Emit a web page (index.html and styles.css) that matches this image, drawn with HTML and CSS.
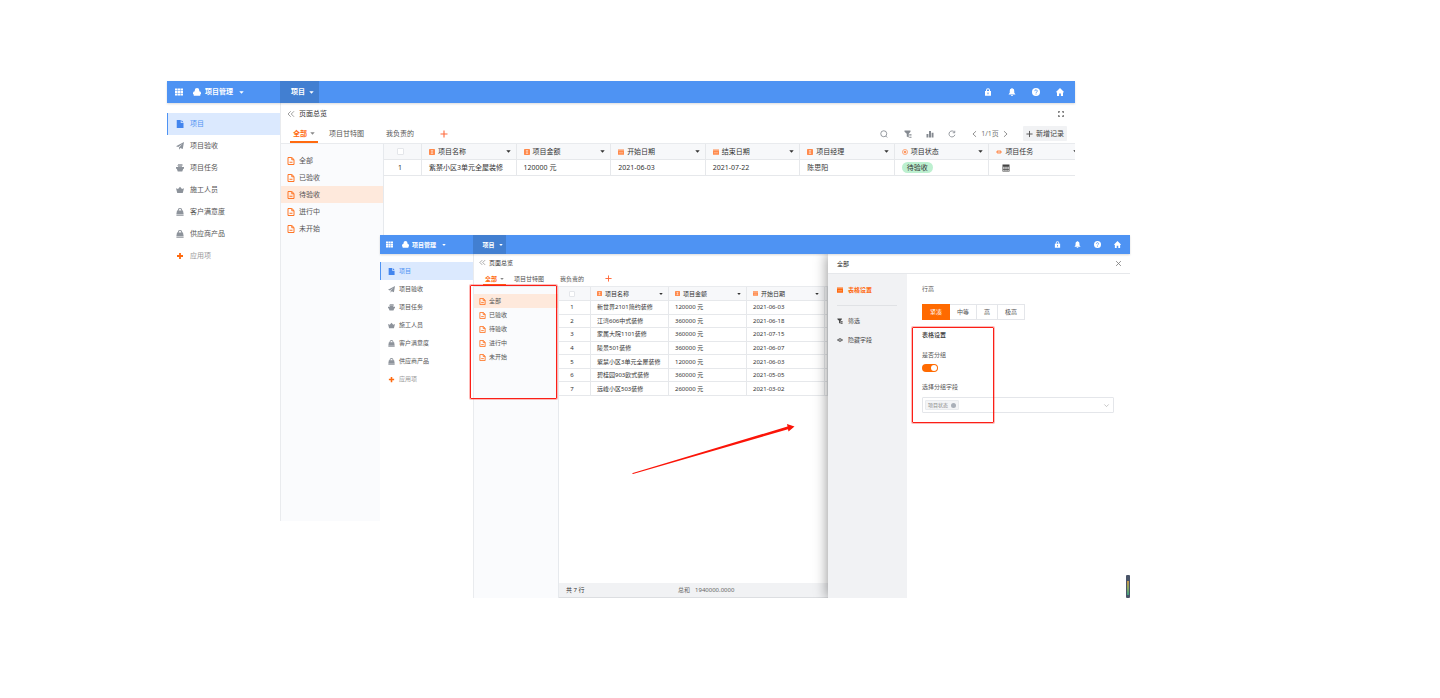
FILE: index.html
```html
<!DOCTYPE html>
<html lang="zh-CN">
<head>
<meta charset="utf-8">
<title>项目管理</title>
<link rel="stylesheet" href="styles.css">
</head>
<body>
<svg class="sprite" aria-hidden="true">
  <symbol id="grid" viewBox="0 0 16 16"><path fill="currentColor" d="M0 1h4.800v4H0zM5.600 1h4.800v4H5.600zM11.200 1H16v4h-4.800zM0 6h4.800v4H0zM5.600 6h4.800v4H5.600zM11.200 6H16v4h-4.800zM0 11h4.800v4H0zM5.600 11h4.800v4H5.600zM11.200 11H16v4h-4.800z"/></symbol>
  <symbol id="logo" viewBox="0 0 16 16"><path fill="currentColor" d="M8 0a4.500 4.500 0 0 1 4.500 4.500V6.500A3.500 3.500 0 0 1 16 10v2.500h-1.500V15.500h-13V12.500H0V10a3.500 3.500 0 0 1 3.500-3.500V4.500A4.500 4.500 0 0 1 8 0z"/></symbol>
  <symbol id="caret" viewBox="0 0 16 16"><path fill="currentColor" d="M1 4h14l-7 8z"/></symbol>
  <symbol id="lock" viewBox="0 0 16 16"><path fill="currentColor" fill-rule="evenodd" d="M4 6V4.500a4 4 0 0 1 8 0V6h2v9.500H2V6zM6 6h4V4.500a2 2 0 0 0-4 0zM7 9v3.500h2V9z"/></symbol>
  <symbol id="bell" viewBox="0 0 16 16"><path fill="currentColor" d="M8 0l1.200 1.200A4.500 4.500 0 0 1 12.500 6v3.500L15 13H1l2.500-3.500V6a4.500 4.500 0 0 1 3.300-4.800zM6 14h4a2 2 0 0 1-4 0z"/></symbol>
  <symbol id="help" viewBox="0 0 16 16"><circle cx="8" cy="8" r="8" fill="currentColor"/><path d="M5.500 6.300a2.500 2.500 0 1 1 3.500 2.200c-.8.400-1 .7-1 1.500M8 11.200v1.700" fill="none" stroke="#4e93f3" stroke-width="1.700"/></symbol>
  <symbol id="home" viewBox="0 0 16 16"><path fill="currentColor" d="M8 0l8 8-1.200 1.200L14 8.500V16H9.800v-5H6.200v5H2V8.500l-.8.700L0 8z"/></symbol>
  <symbol id="doc" viewBox="0 0 16 16"><path fill="currentColor" d="M1.500 0h8v6h5.500v10H1.500zM11 0l4 4.500h-4z"/></symbol>
  <symbol id="plane" viewBox="0 0 16 16"><path fill="currentColor" d="M16 0l-2.500 14-5-2L6 15.500V11l7-7.500-8.500 6.500L0 8.500z"/></symbol>
  <symbol id="printer" viewBox="0 0 16 16"><path fill="currentColor" d="M4 0h9v1.500H4zM3 2.500h10V4H3zM0 6h16v3.500H0zM1.500 9.500h13l-2 5.500h-9zM4 4.500h8V6H4z"/></symbol>
  <symbol id="crown" viewBox="0 0 16 16"><path fill="currentColor" d="M0 4.500l4 1.500 4-4.500L12 6l4-1.500L13.500 14h-11z"/></symbol>
  <symbol id="bag" viewBox="0 0 16 16"><path fill="currentColor" fill-rule="evenodd" d="M3.500 5V4.500a4.500 4.500 0 0 1 9 0V5H14l1.200 7H.8L2 5zM5.500 5h5v-.5a2.500 2.500 0 0 0-5 0zM.8 12.800h14.400v2.700H.8z"/></symbol>
  <symbol id="cross" viewBox="0 0 16 16"><path d="M8 2v12M2 8h12" stroke="currentColor" stroke-width="3.600"/></symbol>
  <symbol id="plus" viewBox="0 0 16 16"><path d="M8 1v14M1 8h14" stroke="currentColor" stroke-width="2.200"/></symbol>
  <symbol id="back" viewBox="0 0 16 16"><path d="M7.500 2.500L2 8l5.500 5.500M14 2.500L8.500 8l5.500 5.500" fill="none" stroke="currentColor" stroke-width="1.600"/></symbol>
  <symbol id="expand" viewBox="0 0 16 16"><path fill="currentColor" d="M2 2h4v2L4 6H2zM14 2h-4v2l2 2h2zM2 14h4v-2l-2-2H2zM14 14h-4v-2l2-2h2z"/></symbol>
  <symbol id="search" viewBox="0 0 16 16"><circle cx="7.500" cy="7.500" r="6" fill="none" stroke="currentColor" stroke-width="1.700"/><path d="M11.500 12l3 3" stroke="currentColor" stroke-width="1.700"/></symbol>
  <symbol id="filter" viewBox="0 0 16 16"><path fill="currentColor" d="M1 1h12v2.500L9.500 7.500V15l-4-2V7.500L1 3.500zM10.500 8H15v1.700h-4.500zM10.500 11H15v1.700h-4.500zM10.500 14H15v1.700h-4.500z"/></symbol>
  <symbol id="chart" viewBox="0 0 16 16"><path fill="currentColor" d="M1 8h3.800v7H1zM6 2h4v13H6zM11.200 5.500H15V15h-3.800z"/></symbol>
  <symbol id="refresh" viewBox="0 0 16 16"><path d="M13 4.500A6 6 0 1 0 13.800 9.500M13.500 1.500v4H9.500" fill="none" stroke="currentColor" stroke-width="1.700"/></symbol>
  <symbol id="prev" viewBox="0 0 16 16"><path d="M11.500 1.500L4.500 8l7 6.500" fill="none" stroke="currentColor" stroke-width="1.800"/></symbol>
  <symbol id="next" viewBox="0 0 16 16"><path d="M4.500 1.500l7 6.500-7 6.500" fill="none" stroke="currentColor" stroke-width="1.800"/></symbol>
  <symbol id="down" viewBox="0 0 16 16"><path d="M3 5.500l5 5 5-5" fill="none" stroke="currentColor" stroke-width="1.500"/></symbol>
  <symbol id="close" viewBox="0 0 16 16"><path d="M2.500 2.500l11 11M13.500 2.500l-11 11" stroke="currentColor" stroke-width="1.800"/></symbol>
  <symbol id="note" viewBox="0 0 16 16"><path d="M2 1h7.500L14 5v10H2zM9.500 1v4.500H14" fill="none" stroke="currentColor" stroke-width="2"/><path d="M5 10.500h6" stroke="currentColor" stroke-width="2"/></symbol>
  <symbol id="text" viewBox="0 0 16 16"><rect width="16" height="16" rx="2" fill="currentColor"/><path d="M5 4.500h6M8 4.500v7M5 11.500h6" stroke="#fff" stroke-width="1.500"/></symbol>
  <symbol id="date" viewBox="0 0 16 16"><path fill="currentColor" d="M0 1h16v3.500H0zM0 5.500h16V15H0z"/><path d="M2.500 10h11" stroke="#fff" stroke-width="1"/></symbol>
  <symbol id="radio" viewBox="0 0 16 16"><circle cx="8" cy="8" r="6.800" fill="none" stroke="currentColor" stroke-width="1.800"/><path fill="currentColor" d="M8 4L12 8 8 12 4 8z"/></symbol>
  <symbol id="link" viewBox="0 0 16 16"><path d="M6.500 3.500L2 8l4.500 4.500M9.500 3.500L14 8l-4.500 4.500M5 8h6" fill="none" stroke="currentColor" stroke-width="2.800"/></symbol>
  <symbol id="sheet" viewBox="0 0 16 16"><path fill="currentColor" fill-rule="evenodd" d="M1 1h14v14H1zM2.300 5.500v2h3v-2zM6.500 5.500v2h3v-2zM10.700 5.500v2h3v-2zM2.300 8.700v2h3v-2zM6.500 8.700v2h3v-2zM10.700 8.700v2h3v-2zM2.300 12v1.700h3V12zM6.500 12v1.700h3V12zM10.700 12v1.700h3V12z"/></symbol>
  <symbol id="eye" viewBox="0 0 16 16"><path d="M1 8q7-8 14 0-7 8-14 0z" fill="none" stroke="currentColor" stroke-width="2.200"/><circle cx="8" cy="8" r="2" fill="currentColor"/></symbol>
</svg>

<main class="desktop">
  <section class="win win-back">
    <header class="topbar">
      <div class="brand"><svg class="ic"><use href="#grid"/></svg><svg class="ic logo"><use href="#logo"/></svg><strong>项目管理</strong><svg class="ic-s"><use href="#caret"/></svg></div>
      <button class="app-tab">项目<svg class="ic-s"><use href="#caret"/></svg></button>
      <nav class="top-actions">
        <button aria-label="锁定"><svg class="ic"><use href="#lock"/></svg></button>
        <button aria-label="通知"><svg class="ic"><use href="#bell"/></svg></button>
        <button aria-label="帮助"><svg class="ic"><use href="#help"/></svg></button>
        <button aria-label="首页"><svg class="ic"><use href="#home"/></svg></button>
      </nav>
    </header>
    <div class="body">
      <nav class="side">
        <a href="#" class="active"><svg class="ic"><use href="#doc"/></svg>项目</a>
        <a href="#"><svg class="ic"><use href="#plane"/></svg>项目验收</a>
        <a href="#"><svg class="ic"><use href="#printer"/></svg>项目任务</a>
        <a href="#"><svg class="ic"><use href="#crown"/></svg>施工人员</a>
        <a href="#"><svg class="ic"><use href="#bag"/></svg>客户满意度</a>
        <a href="#"><svg class="ic"><use href="#bag"/></svg>供应商产品</a>
        <a href="#" class="add"><svg class="ic"><use href="#cross"/></svg>应用项</a>
      </nav>
      <div class="content">
        <div class="title-row"><svg class="ic"><use href="#back"/></svg><span>页面总览</span><svg class="ic end"><use href="#expand"/></svg></div>
        <div class="tab-row">
          <button class="tab current">全部<svg class="ic-s"><use href="#caret"/></svg></button>
          <button class="tab">项目甘特图</button>
          <button class="tab">我负责的</button>
          <button class="tab-add" aria-label="添加"><svg class="ic"><use href="#plus"/></svg></button>
          <div class="tools">
            <button aria-label="搜索"><svg class="ic"><use href="#search"/></svg></button>
            <span class="gap"></span>
            <button aria-label="筛选"><svg class="ic"><use href="#filter"/></svg></button>
            <button aria-label="图表"><svg class="ic"><use href="#chart"/></svg></button>
            <button aria-label="刷新"><svg class="ic"><use href="#refresh"/></svg></button>
            <div class="pager"><svg class="ic"><use href="#prev"/></svg><span>1/1页</span><svg class="ic"><use href="#next"/></svg></div>
            <button class="new"><svg class="ic"><use href="#plus"/></svg>新增记录</button>
          </div>
        </div>
        <div class="split">
          <nav class="groups">
            <a href="#"><svg class="ic"><use href="#note"/></svg>全部</a>
            <a href="#"><svg class="ic"><use href="#note"/></svg>已验收</a>
            <a href="#" class="picked"><svg class="ic"><use href="#note"/></svg>待验收</a>
            <a href="#"><svg class="ic"><use href="#note"/></svg>进行中</a>
            <a href="#"><svg class="ic"><use href="#note"/></svg>未开始</a>
          </nav>
          <div class="table-area">
            <table>
              <thead><tr>
                <th class="num"><input type="checkbox" aria-label="全选"></th>
                <th><div class="th"><svg><use href="#text"/></svg>项目名称<svg class="sort"><use href="#caret"/></svg></div></th>
                <th><div class="th"><svg><use href="#text"/></svg>项目金额<svg class="sort"><use href="#caret"/></svg></div></th>
                <th><div class="th"><svg><use href="#date"/></svg>开始日期<svg class="sort"><use href="#caret"/></svg></div></th>
                <th><div class="th"><svg><use href="#date"/></svg>结束日期<svg class="sort"><use href="#caret"/></svg></div></th>
                <th><div class="th"><svg><use href="#text"/></svg>项目经理<svg class="sort"><use href="#caret"/></svg></div></th>
                <th><div class="th"><svg><use href="#radio"/></svg>项目状态<svg class="sort"><use href="#caret"/></svg></div></th>
                <th><div class="th"><svg><use href="#link"/></svg>项目任务<svg class="sort"><use href="#caret"/></svg></div></th>
              </tr></thead>
              <tbody><tr><td class="num">1</td><td>紫禁小区3单元全屋装修</td><td>120000 元</td><td>2021-06-03</td><td>2021-07-22</td><td>陈思阳</td><td><span class="badge">待验收</span></td><td><svg class="ic sheet"><use href="#sheet"/></svg></td></tr></tbody>
            </table>
          </div>
        </div>
      </div>
    </div>
  </section>

  <section class="win win-front">
    <header class="topbar">
      <div class="brand"><svg class="ic"><use href="#grid"/></svg><svg class="ic logo"><use href="#logo"/></svg><strong>项目管理</strong><svg class="ic-s"><use href="#caret"/></svg></div>
      <button class="app-tab">项目<svg class="ic-s"><use href="#caret"/></svg></button>
      <nav class="top-actions">
        <button aria-label="锁定"><svg class="ic"><use href="#lock"/></svg></button>
        <button aria-label="通知"><svg class="ic"><use href="#bell"/></svg></button>
        <button aria-label="帮助"><svg class="ic"><use href="#help"/></svg></button>
        <button aria-label="首页"><svg class="ic"><use href="#home"/></svg></button>
      </nav>
    </header>
    <div class="body">
      <nav class="side">
        <a href="#" class="active"><svg class="ic"><use href="#doc"/></svg>项目</a>
        <a href="#"><svg class="ic"><use href="#plane"/></svg>项目验收</a>
        <a href="#"><svg class="ic"><use href="#printer"/></svg>项目任务</a>
        <a href="#"><svg class="ic"><use href="#crown"/></svg>施工人员</a>
        <a href="#"><svg class="ic"><use href="#bag"/></svg>客户满意度</a>
        <a href="#"><svg class="ic"><use href="#bag"/></svg>供应商产品</a>
        <a href="#" class="add"><svg class="ic"><use href="#cross"/></svg>应用项</a>
      </nav>
      <div class="content">
        <div class="title-row"><svg class="ic"><use href="#back"/></svg><span>页面总览</span></div>
        <div class="tab-row">
          <button class="tab current">全部<svg class="ic-s"><use href="#caret"/></svg></button>
          <button class="tab">项目甘特图</button>
          <button class="tab">我负责的</button>
          <button class="tab-add" aria-label="添加"><svg class="ic"><use href="#plus"/></svg></button>
        </div>
        <div class="split">
          <nav class="groups">
            <a href="#" class="picked"><svg class="ic"><use href="#note"/></svg>全部</a>
            <a href="#"><svg class="ic"><use href="#note"/></svg>已验收</a>
            <a href="#"><svg class="ic"><use href="#note"/></svg>待验收</a>
            <a href="#"><svg class="ic"><use href="#note"/></svg>进行中</a>
            <a href="#"><svg class="ic"><use href="#note"/></svg>未开始</a>
          </nav>
          <div class="table-area">
            <table>
              <thead><tr>
                <th class="num"><input type="checkbox" aria-label="全选"></th>
                <th><div class="th"><svg><use href="#text"/></svg>项目名称<svg class="sort"><use href="#caret"/></svg></div></th>
                <th><div class="th"><svg><use href="#text"/></svg>项目金额<svg class="sort"><use href="#caret"/></svg></div></th>
                <th><div class="th"><svg><use href="#date"/></svg>开始日期<svg class="sort"><use href="#caret"/></svg></div></th>
                <th class="rest"></th>
              </tr></thead>
              <tbody>
                <tr><td class="num">1</td><td>新世界2101简约装修</td><td>120000 元</td><td>2021-06-03</td><td></td></tr>
                <tr><td class="num">2</td><td>江湾606中式装修</td><td>360000 元</td><td>2021-06-18</td><td></td></tr>
                <tr><td class="num">3</td><td>家属大院1101装修</td><td>360000 元</td><td>2021-07-15</td><td></td></tr>
                <tr><td class="num">4</td><td>陵景501装修</td><td>360000 元</td><td>2021-06-07</td><td></td></tr>
                <tr><td class="num">5</td><td>紫禁小区3单元全屋装修</td><td>120000 元</td><td>2021-06-03</td><td></td></tr>
                <tr><td class="num">6</td><td>碧桂园903欧式装修</td><td>360000 元</td><td>2021-05-05</td><td></td></tr>
                <tr><td class="num">7</td><td>远峰小区503装修</td><td>260000 元</td><td>2021-03-02</td><td></td></tr>
              </tbody>
            </table>
            <footer class="summary"><span class="count">共 7 行</span><span>总和</span><span>1940000.0000</span></footer>
          </div>
        </div>
      </div>
      <aside class="drawer">
        <header class="drawer-head"><span>全部</span><button aria-label="关闭"><svg class="ic"><use href="#close"/></svg></button></header>
        <div class="drawer-body">
          <nav class="drawer-nav">
            <a href="#" class="on"><svg class="ic"><use href="#date"/></svg>表格设置</a>
            <hr>
            <a href="#"><svg class="ic"><use href="#filter"/></svg>筛选</a>
            <a href="#"><svg class="ic"><use href="#eye"/></svg>隐藏字段</a>
          </nav>
          <form class="settings">
            <p class="row-label">行高</p>
            <div class="segments"><button type="button" class="on">紧凑</button><button type="button">中等</button><button type="button">高</button><button type="button">极高</button></div>
            <h2>表格设置</h2>
            <label class="row-label" for="grouped">是否分组</label>
            <input class="switch" type="checkbox" role="switch" id="grouped" checked>
            <label class="row-label" for="field">选择分组字段</label>
            <div class="picker"><span class="tag">项目状态<button type="button" aria-label="移除"></button></span><select id="field"><option value=""></option></select><svg class="ic"><use href="#down"/></svg></div>
          </form>
        </div>
      </aside>
    </div>
    <i class="edge-widget"></i>
  </section>

  <div class="mark mark-groups"></div>
  <div class="mark mark-settings"></div>
  <svg class="arrow" viewBox="0 0 164 54" aria-hidden="true"><path fill="#fb1408" d="M0 51.200L155.500 4.500 155 2l7.500 2.500-6 5-.5-2.200L1 52z"/></svg>
</main>
</body>
</html>
```

FILE: styles.css
```css
* { box-sizing: border-box; }

body {
  margin: 0;
  background: #fff;
  color: #444;
  font-family: "Noto Sans", "Noto Sans CJK SC", sans-serif;
}

button, input, select {
  margin: 0;
  padding: 0;
  border: 0;
  background: none;
  color: inherit;
  font: inherit;
}

a { color: inherit; text-decoration: none; }
svg { display: block; flex: none; }
.sprite { position: absolute; width: 0; height: 0; }

.desktop {
  position: relative;
  min-height: 100vh;
  overflow: hidden;
}

.win {
  position: absolute;
  display: flex;
  flex-direction: column;
  background: #fff;
  font-size: var(--text);
  line-height: var(--line);
}

.win-back {
  --text: 7px; --line: 10px; --icon: 8px; --small: 5px;
  --bar: 22px; --brand-in: 8px; --side: 113px; --item: 22px; --side-top: 10px; --side-gap: 6px;
  --title: 21px; --tabs: 20px; --pad: 9px; --tab-in: 3px; --tab-pad: 11px; --caret-gap: 3px;
  --groups: 103px; --groups-top: 8px; --group: 17px; --group-in: 6px; --gap: 4px;
  --num: 38px; --cell: 7px; --head: 16px; --row: 16px; --action: 24px;
  --app: 39px; --plus-gap: 15px;
  top: 81px;
  left: 167px;
  right: 365px;
  min-height: 440px;
}

.win-front {
  --text: 6px; --line: 8px; --icon: 7px; --small: 4px;
  --bar: 19px; --brand-in: 6px; --side: 93px; --item: 18px; --side-top: 8px; --side-gap: 4px;
  --title: 17px; --tabs: 16px; --pad: 9px; --tab-in: 2px; --tab-pad: 8px; --caret-gap: 3px;
  --groups: 85px; --groups-top: 7px; --group: 14px; --group-in: 5px; --gap: 3px;
  --num: 32px; --cell: 6px; --head: 14px; --row: 13px; --action: 20px;
  --app: 33px; --plus-gap: 13px;
  top: 235px;
  left: 380px;
  right: 310px;
  min-height: 363px;
}

.ic { width: var(--icon); height: var(--icon); }
.ic-s { width: var(--small); height: var(--small); }

.topbar {
  position: relative;
  z-index: 2;
  display: flex;
  height: var(--bar);
  background: #4e93f3;
  color: #fff;
  box-shadow: 0 1px 2px rgba(0, 0, 0, .15);
}
.brand {
  display: flex;
  align-items: center;
  width: var(--side);
  padding-left: var(--brand-in);
}
.brand .logo { margin: 0 var(--gap) 0 calc(var(--icon) + 2px); }
.brand .ic-s { margin-left: 6px; }
.app-tab {
  display: flex;
  align-items: center;
  justify-content: center;
  gap: 4px;
  width: var(--app);
  padding-left: 6px;
  background: #427fd1;
  font-weight: 700;
}
.top-actions { display: flex; margin-left: auto; padding-right: 3px; }
.top-actions button { display: grid; place-items: center; width: var(--action); }

.body { position: relative; flex: 1; display: flex; }

.side { width: var(--side); padding-top: var(--side-top); color: #555; }
.side a {
  display: flex;
  align-items: center;
  gap: var(--side-gap);
  height: var(--item);
  padding-left: var(--icon);
  border-left: 1px solid transparent;
}
.side .ic { color: #8d939b; }
.side .active { border-color: #4e93f3; background: #dbe9fe; color: #4e93f3; }
.side .active .ic { color: #4285ee; }
.side .add { color: #999; }
.side .add .ic { color: #ff6a0f; }

.content {
  flex: 1;
  display: flex;
  flex-direction: column;
  min-width: 0;
  border-left: 1px solid #e9ebee;
}
.title-row {
  display: flex;
  align-items: center;
  gap: var(--gap);
  height: var(--title);
  padding: 0 10px 0 var(--group-in);
  color: #333;
}
.title-row .ic { color: #888; }
.title-row .end { margin-left: auto; }

.tab-row {
  display: flex;
  height: var(--tabs);
  padding-left: var(--pad);
  border-bottom: 1px solid #e9ebee;
  color: #555;
}
.tab { padding: 0 var(--tab-pad); }
.tab.current {
  display: flex;
  align-items: center;
  gap: var(--caret-gap);
  padding: 0 var(--tab-in);
  border-top: 2px solid transparent;
  border-bottom: 2px solid #ff6a0f;
  color: #ff6a0f;
  font-weight: 700;
}
.tab.current .ic-s { color: #888; }
.tab-add { margin-left: var(--plus-gap); color: #ff6a3c; }

.tools { display: flex; align-items: center; margin-left: auto; padding-right: 8px; color: #777; }
.tools > button { display: grid; place-items: center; width: 22px; }
.tools > button .ic { color: #858a91; }
.gap { width: 2px; }
.pager { display: flex; align-items: center; justify-content: space-between; width: 38px; margin: 0 14px 0 8px; }
.pager .ic { width: 7px; }
.tools .new {
  display: flex;
  align-items: center;
  justify-content: center;
  gap: 3px;
  width: 44px;
  height: 15px;
  border-radius: 1px;
  background: #f1f2f4;
  color: #444;
}
.tools .new .ic { width: 7px; color: #555; }

.split { flex: 1; display: flex; min-height: 0; }
.groups {
  width: var(--groups);
  flex: none;
  padding-top: var(--groups-top);
  border-right: 1px solid #e6e9ed;
  background: #fafbfd;
  color: #555;
}
.groups a {
  display: flex;
  align-items: center;
  gap: var(--gap);
  height: var(--group);
  padding-left: var(--group-in);
}
.groups .ic { color: #ff7626; }
.groups .picked { background: #fee9dc; }

.table-area { flex: 1; display: flex; flex-direction: column; min-width: 0; overflow: hidden; }
table { width: 100%; table-layout: fixed; border-collapse: separate; border-spacing: 0; color: #333; }
.win-back table { width: calc(100% + 9px); }
.win-front table { height: 109px; }
th, td {
  height: var(--row);
  padding: 0 0 0 var(--cell);
  border-right: 1px solid #e6e8eb;
  border-bottom: 1px solid #e6e8eb;
  font-weight: 400;
  line-height: var(--line);
  text-align: left;
  white-space: nowrap;
}
th { height: var(--head); background: #f7f8fa; }
.win-front th { width: 78px; }
.win-front th.num, th.num { width: var(--num); }
.win-front th.rest { width: auto; }
.num { padding: 0 5px 0 0; text-align: center; }
.th { display: flex; align-items: center; gap: 3px; padding-right: 5px; }
.th svg { width: calc(var(--icon) - 2px); height: calc(var(--icon) - 2px); color: #ff8a4c; }
.th .sort { width: var(--small); height: var(--small); margin-left: auto; color: #333; }
th input {
  display: block;
  appearance: none;
  width: calc(var(--icon) - 1px);
  height: calc(var(--icon) - 1px);
  margin: 0 auto;
  border: 1px solid #e4e6ea;
  border-radius: 1px;
  background: #fff;
}
.badge {
  display: inline-block;
  height: 11px;
  padding: 0 5px;
  border-radius: 6px;
  background: #bdf0d0;
  line-height: 11px;
}
td .sheet { margin-left: 6px; color: #444; }

.summary {
  display: flex;
  align-items: center;
  gap: 5px;
  height: 15px;
  margin-top: auto;
  padding-left: 7px;
  border-bottom: 1px solid #dcdee1;
  background: #f1f2f4;
  color: #666;
}
.summary .count { width: 107px; color: #333; }

.drawer {
  width: 302px;
  flex: none;
  display: flex;
  flex-direction: column;
  background: #fff;
  box-shadow: -1px 0 12px rgba(0, 0, 0, .4);
  clip-path: inset(0 0 0 -16px);
}
.drawer-head {
  display: flex;
  align-items: center;
  justify-content: space-between;
  height: 20px;
  padding: 0 8px 0 9px;
  border-bottom: 1px solid #e6e8eb;
  color: #222;
}
.drawer-head button { color: #777; }
.drawer-body { flex: 1; display: flex; }
.drawer-nav { width: 79px; padding: 6px 10px 0 9px; background: #f1f2f4; }
.drawer-nav a { display: flex; align-items: center; gap: 5px; height: 19px; }
.drawer-nav .ic { width: 6px; height: 6px; }
.drawer-nav .on { color: #ff6a0f; font-weight: 700; }
.drawer-nav hr { height: 1px; margin: 6px 0 5px; border: 0; background: #e0e2e5; }
.settings { flex: 1; padding: 11px 16px 0 15px; }
.row-label { display: block; margin: 0; color: #555; }
.segments { display: flex; margin: 11px 0; }
.segments button {
  height: 16px;
  padding: 0 7px;
  border: 1px solid #e4e6ea;
  border-left: 0;
  color: #555;
}
.segments .on { padding: 0 7px; border: 1px solid #ff6a00; background: #ff6a00; color: #fff; }
.settings h2 { margin: 0 0 12px; color: #333; font-size: 6px; font-weight: 500; line-height: 8px; }
.switch {
  display: flex;
  justify-content: flex-end;
  appearance: none;
  width: 16px;
  height: 8px;
  margin: 5px 0 11px;
  padding: 1px;
  border-radius: 4px;
  background: #ff6a00;
}
.switch::before { content: ""; width: 6px; height: 6px; border-radius: 50%; background: #fff; }
.picker {
  display: flex;
  align-items: center;
  height: 16px;
  margin-top: 6px;
  padding: 0 3px 0 2px;
  border: 1px solid #e4e6ea;
  border-radius: 1px;
}
.picker select { appearance: none; flex: 1; height: 14px; min-width: 0; }
.picker .ic { color: #aaa; }
.tag {
  display: flex;
  align-items: center;
  gap: 3px;
  height: 10px;
  padding: 0 2px;
  border: 1px solid #e9ebee;
  border-radius: 1px;
  background: #f3f4f6;
  color: #888;
  font-size: 5px;
}
.tag button { width: 5px; height: 5px; border-radius: 50%; background: #a9afb8; }

.edge-widget {
  position: absolute;
  right: 0;
  bottom: 0;
  width: 4px;
  height: 23px;
  border: 1px solid #4a5568;
  border-top-width: 6px;
  border-bottom-width: 3px;
  border-radius: 1px;
  background: linear-gradient(#c9964a, #8da860 50%, #3fa083);
}

.mark {
  position: absolute;
  border: 1px solid #fb1f17;
  border-radius: 1px;
  box-shadow: 0 0 0 1px rgba(251, 31, 23, .3);
}
.mark-groups { top: 285px; left: 470px; width: 87px; height: 114px; }
.mark-settings { top: 327px; left: 912px; width: 82px; height: 96px; }
.arrow { position: absolute; top: 422px; left: 632px; width: 164px; height: 54px; }
```
